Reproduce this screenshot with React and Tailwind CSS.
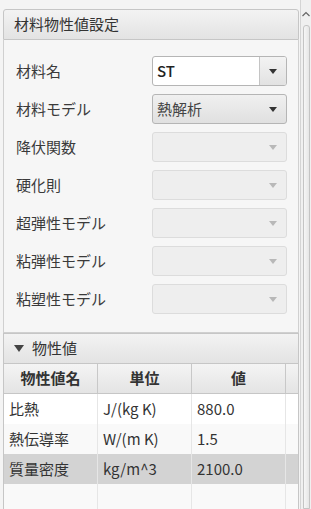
import React from 'react';

const font = { fontFamily: '"Noto Sans CJK JP", "Noto Sans", sans-serif' };

const Arrow = ({ dim }) => (
  <svg width="8" height="5" viewBox="0 0 8 5" className="shrink-0">
    <path d="M0 0 H8 L4 5 Z" fill={dim ? '#b8b8b8' : '#333333'} />
  </svg>
);

const EditCombo = ({ value }) => (
  <div className="flex w-[135px] h-[30px] rounded-[3px] border border-[#b5b5b5] overflow-hidden bg-white">
    <div className="flex-1 flex items-center pl-[4px] text-[15px] text-[#222] font-medium">{value}</div>
    <div className="w-[27px] flex items-center justify-center border-l border-[#c4c4c4] bg-gradient-to-b from-[#f3f3f3] to-[#e2e2e2]">
      <Arrow />
    </div>
  </div>
);

const Combo = ({ value, disabled }) => (
  <div
    className={
      disabled
        ? 'flex items-center w-[135px] h-[30px] rounded-[3px] border border-[#dcdcdc] bg-[#eeeeee]'
        : 'flex items-center w-[135px] h-[30px] rounded-[3px] border border-[#b5b5b5] bg-gradient-to-b from-[#f0f0f0] to-[#e0e0e0]'
    }
  >
    <div className="flex-1 pl-[4px] text-[15px] text-[#444]">{value}</div>
    <div className="w-[27px] flex items-center justify-center">
      <Arrow dim={disabled} />
    </div>
  </div>
);

const rows = [
  { label: '材料名', edit: 'ST' },
  { label: '材料モデル', value: '熱解析' },
  { label: '降伏関数', disabled: true },
  { label: '硬化則', disabled: true },
  { label: '超弾性モデル', disabled: true },
  { label: '粘弾性モデル', disabled: true },
  { label: '粘塑性モデル', disabled: true },
];

const props = [
  { name: '比熱', unit: 'J/(kg K)', val: '880.0', bg: 'bg-white' },
  { name: '熱伝導率', unit: 'W/(m K)', val: '1.5', bg: 'bg-[#f9f9f9]' },
  { name: '質量密度', unit: 'kg/m^3', val: '2100.0', bg: 'bg-[#d3d3d3]' },
  { name: '', unit: '', val: '', bg: 'bg-[#f9f9f9]' },
];

export default function App() {
  return (
    <div className="flex w-[311px] h-[509px] overflow-hidden bg-[#f4f4f4] text-[#333]" style={font}>
      {/* content column */}
      <div className="w-[300px] pl-[3px] pr-[1px] pt-[9px] flex flex-col">
        {/* titled pane 1 */}
        <div className="h-[31px] shrink-0 flex items-center px-[10px] border border-[#c6c6c6] rounded-t-[3px] bg-gradient-to-b from-[#f3f3f3] to-[#e3e3e3] text-[15px] text-[#333]">
          材料物性値設定
        </div>
        <div className="flex flex-col gap-[8px] pt-[16px] pb-[18px] border-x border-b border-[#d0d0d0] bg-[#f6f6f6]">
          {rows.map((r) => (
            <div key={r.label} className="flex items-center h-[30px]">
              <div className="w-[148px] pl-[12px] text-[15px] text-[#3a3a3a]">{r.label}</div>
              {r.edit ? <EditCombo value={r.edit} /> : <Combo value={r.value} disabled={r.disabled} />}
            </div>
          ))}
        </div>

        {/* titled pane 2 */}
        <div className="h-[31px] shrink-0 flex items-center gap-[8px] px-[10px] border border-[#c6c6c6] bg-gradient-to-b from-[#f3f3f3] to-[#e3e3e3] text-[15px] text-[#333]">
          <svg width="10" height="7" viewBox="0 0 10 7">
            <path d="M0 0 H10 L5 7 Z" fill="#444" />
          </svg>
          物性値
        </div>
        <div className="flex-1 flex flex-col border-x border-[#c6c6c6] bg-[#f9f9f9]">
          <div className="flex h-[30px] shrink-0 border-b border-[#c6c6c6] bg-gradient-to-b from-[#f4f4f4] to-[#e4e4e4] text-[15px] font-bold text-[#333]">
            <div className="w-[94px] flex items-center justify-center border-r border-[#c8c8c8]">物性値名</div>
            <div className="w-[94px] flex items-center justify-center border-r border-[#c8c8c8]">単位</div>
            <div className="w-[94px] flex items-center justify-center border-r border-[#c8c8c8]">値</div>
            <div className="flex-1" />
          </div>
          {props.map((p, i) => (
            <div key={i} className={`flex h-[30px] shrink-0 text-[15px] text-[#333] ${p.bg}`}>
              <div className="w-[94px] flex items-center pl-[5px] border-r border-[#e6e6e6]">{p.name}</div>
              <div className="w-[94px] flex items-center pl-[5px] border-r border-[#e6e6e6]">{p.unit}</div>
              <div className="w-[94px] flex items-center pl-[5px] border-r border-[#e6e6e6]">{p.val}</div>
              <div className="flex-1" />
            </div>
          ))}
        </div>
      </div>

      {/* scrollbar */}
      <div className="w-[11px] flex flex-col items-center border-l border-[#d4d4d4] bg-[#f0f0f0]">
        <svg width="8" height="6" viewBox="0 0 8 6" className="mt-[11px]">
          <path d="M0.5 5 L4 1.5 L7.5 5" stroke="#666" strokeWidth="1.2" fill="none" />
        </svg>
        <div className="mt-[8px] w-[7px] flex-1 rounded-t-[3px] border border-[#c4c4c4] bg-gradient-to-r from-[#f6f6f6] to-[#e6e6e6]" />
      </div>
    </div>
  );
}
